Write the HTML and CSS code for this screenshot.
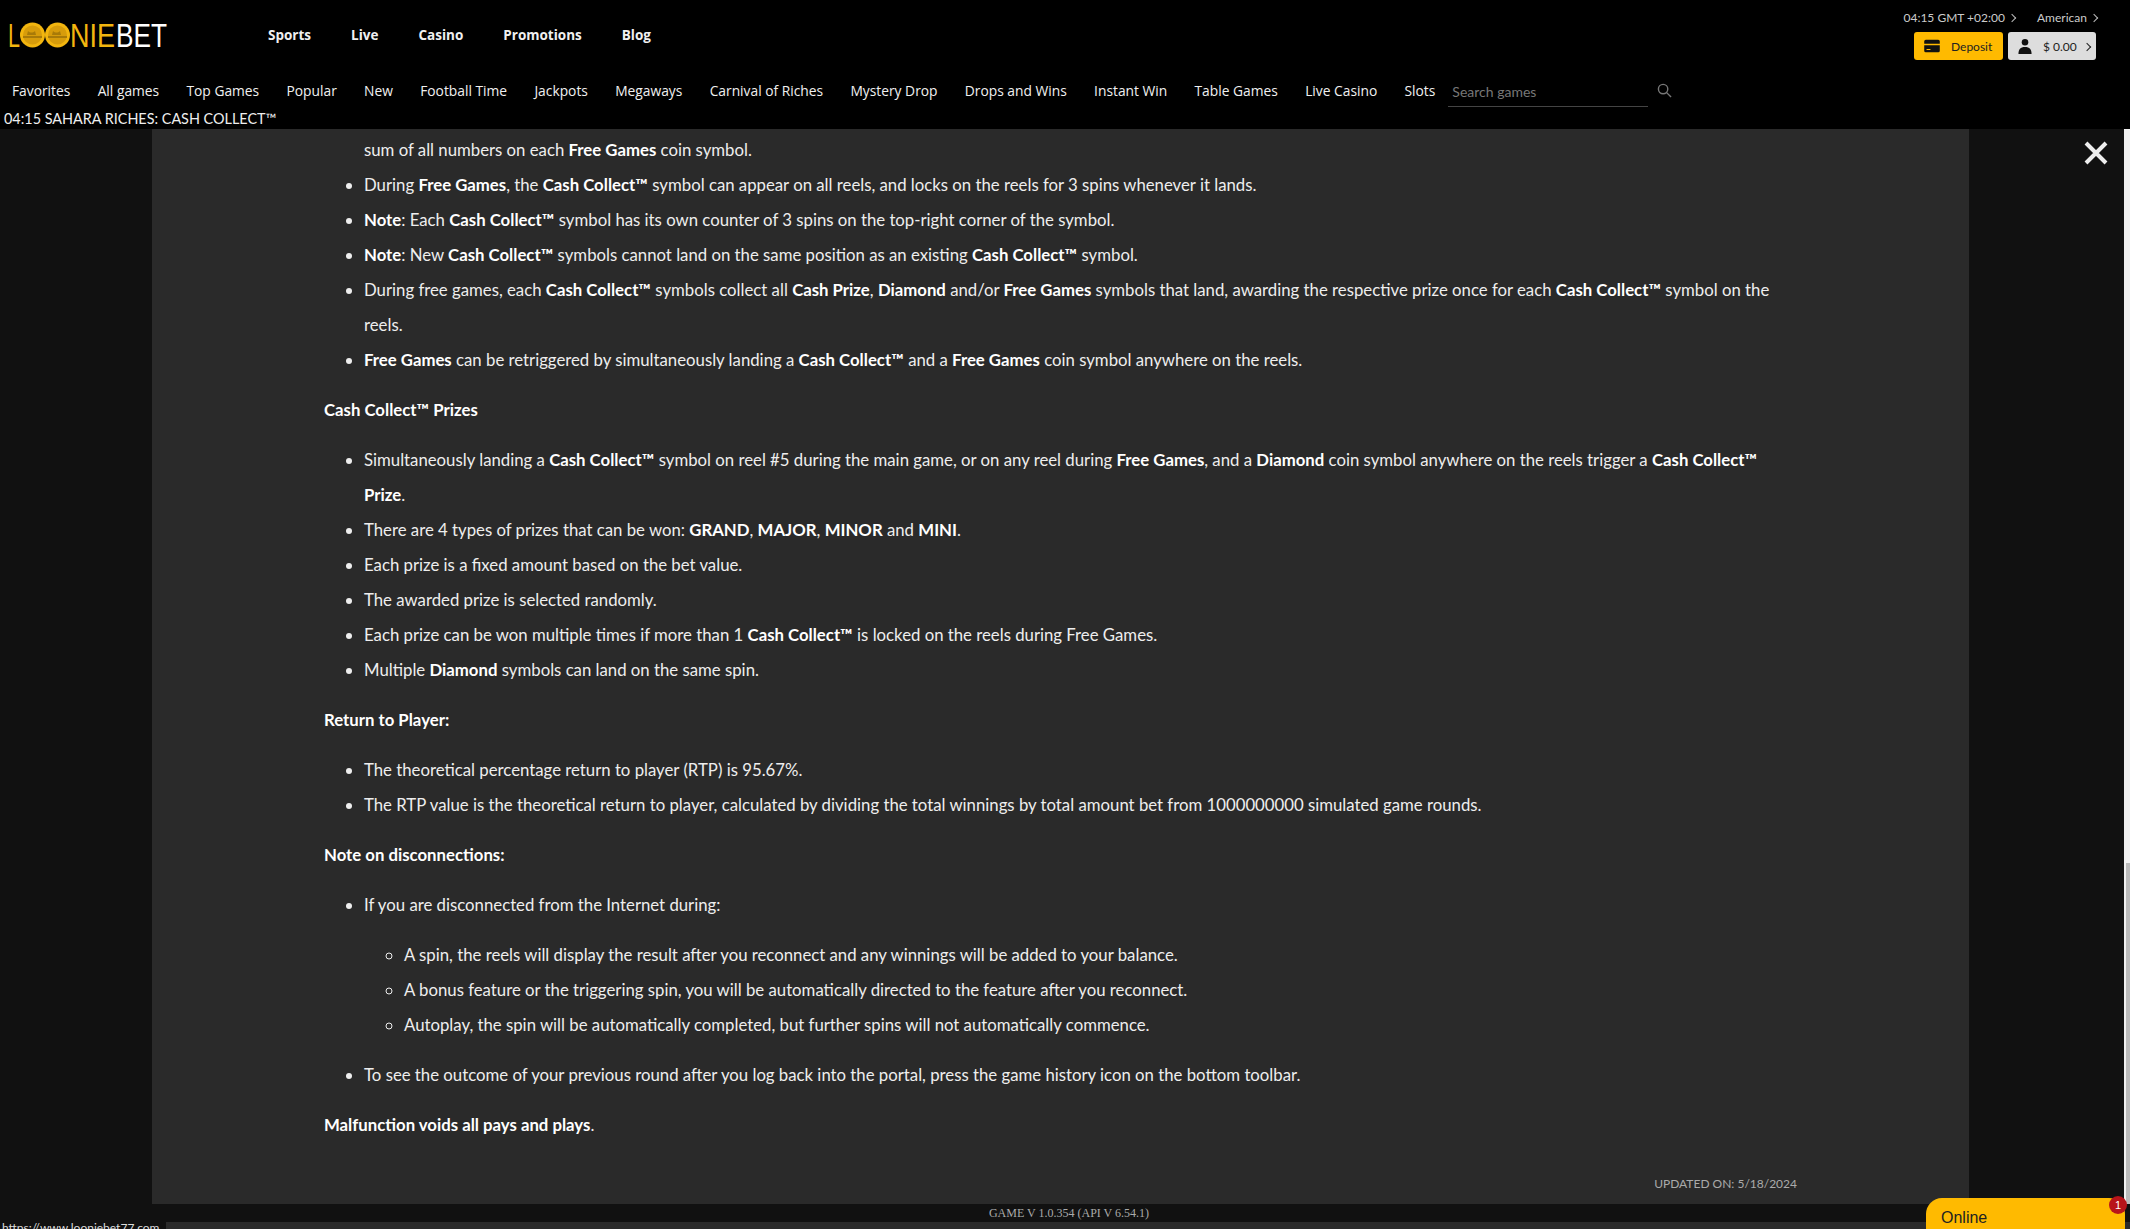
FILE: index.html
```html
<!DOCTYPE html>
<html lang="en">

<head>
    <meta charset="UTF-8" />
    <meta name="viewport" content="width=device-width, initial-scale=1.0" />
    <title>Looniebet - Sahara Riches: Cash Collect</title>
    <link rel="stylesheet" href="styles.css">
</head>

<body>
    <header class="topo">
        <div class="linha-marca">
            <a class="logo" href="#">
                <svg class="logo-svg" viewBox="0 0 160 30">
                    <text class="logo-ouro" x="0" y="27" textLength="12" lengthAdjust="spacingAndGlyphs">L</text>
                    <circle cx="24.500" cy="15" r="12.500" fill="#f2b50f"/>
                    <circle cx="24.500" cy="15" r="9.500" fill="#d79c0b"/>
                    <path d="M15 16h19v2H15zM20 11c2 2 5 2 7 0l1 4h-9z" fill="#a87a08"/>
                    <circle cx="49.500" cy="15" r="12.500" fill="#f2b50f"/>
                    <circle cx="49.500" cy="15" r="9.500" fill="#d79c0b"/>
                    <path d="M40 16h19v2H40zM45 11c2 2 5 2 7 0l1 4h-9z" fill="#a87a08"/>
                    <text class="logo-ouro" x="62" y="27" textLength="45" lengthAdjust="spacingAndGlyphs">NIE</text>
                    <text class="logo-branco" x="108" y="27" textLength="51" lengthAdjust="spacingAndGlyphs">BET</text>
                </svg>
            </a>
            <nav class="menu-principal">
                <a href="#">Sports</a>
                <a href="#">Live</a>
                <a href="#">Casino</a>
                <a href="#">Promotions</a>
                <a href="#">Blog</a>
            </nav>
            <div class="conta">
                <div class="conta-info">
                    <span>04:15 GMT +02:00 <i class="seta"></i></span>
                    <span>American <i class="seta"></i></span>
                </div>
                <div class="conta-botoes">
                    <a class="btn btn-deposito" href="#">
                        <svg class="icone-deposito" viewBox="0 0 20 18"><path d="M2 1h16a2 2 0 0 1 2 2v3H0V3a2 2 0 0 1 2-2zM0 8h20v7a2 2 0 0 1-2 2H2a2 2 0 0 1-2-2zm3 5v1h5v-1z" fill="#111"/></svg>
                        Deposit
                    </a>
                    <a class="btn btn-saldo" href="#">
                        <svg class="icone-saldo" viewBox="0 0 14 16"><circle cx="7" cy="3.500" r="3.500" fill="#111"/><path d="M0 16c0-5 2-7.500 7-7.500s7 2.500 7 7.500z" fill="#111"/></svg>
                        <span class="saldo-valor">$ 0.00 <i class="seta seta-escura"></i></span>
                    </a>
                </div>
            </div>
        </div>
        <div class="linha-jogos">
            <nav class="menu-jogos">
                <a href="#">Favorites</a>
                <a href="#">All games</a>
                <a href="#">Top Games</a>
                <a href="#">Popular</a>
                <a href="#">New</a>
                <a href="#">Football Time</a>
                <a href="#">Jackpots</a>
                <a href="#">Megaways</a>
                <a href="#">Carnival of Riches</a>
                <a href="#">Mystery Drop</a>
                <a href="#">Drops and Wins</a>
                <a href="#">Instant Win</a>
                <a href="#">Table Games</a>
                <a href="#">Live Casino</a>
                <a href="#">Slots</a>
            </nav>
            <input class="busca" type="text" placeholder="Search games">
            <svg class="lupa" viewBox="0 0 16 16"><circle cx="6.500" cy="6.500" r="5" fill="none" stroke="#777" stroke-width="1.500"/><path d="M10 10l5 5" stroke="#777" stroke-width="1.500"/></svg>
        </div>
        <div class="titulo-jogo">04:15 SAHARA RICHES: CASH COLLECT™</div>
    </header>

    <main class="area">
        <article class="painel">
            <ul>
                <li class="continua">sum of all numbers on each <b>Free Games</b> coin symbol.</li>
                <li>During <b>Free Games</b>, the <b>Cash Collect™</b> symbol can appear on all reels, and locks on the reels for 3 spins whenever it lands.</li>
                <li><b>Note</b>: Each <b>Cash Collect™</b> symbol has its own counter of 3 spins on the top-right corner of the symbol.</li>
                <li><b>Note</b>: New <b>Cash Collect™</b> symbols cannot land on the same position as an existing <b>Cash Collect™</b> symbol.</li>
                <li>During free games, each <b>Cash Collect™</b> symbols collect all <b>Cash Prize</b>, <b>Diamond</b> and/or <b>Free Games</b> symbols that land, awarding the respective prize once for each <b>Cash Collect™</b> symbol on the reels.</li>
                <li><b>Free Games</b> can be retriggered by simultaneously landing a <b>Cash Collect™</b> and a <b>Free Games</b> coin symbol anywhere on the reels.</li>
            </ul>
            <p><b>Cash Collect™ Prizes</b></p>
            <ul>
                <li>Simultaneously landing a <b>Cash Collect™</b> symbol on reel #5 during the main game, or on any reel during <b>Free Games</b>, and a <b>Diamond</b> coin symbol anywhere on the reels trigger a <b>Cash Collect™ Prize</b>.</li>
                <li>There are 4 types of prizes that can be won: <b>GRAND</b>, <b>MAJOR</b>, <b>MINOR</b> and <b>MINI</b>.</li>
                <li>Each prize is a fixed amount based on the bet value.</li>
                <li>The awarded prize is selected randomly.</li>
                <li>Each prize can be won multiple times if more than 1 <b>Cash Collect™</b> is locked on the reels during Free Games.</li>
                <li>Multiple <b>Diamond</b> symbols can land on the same spin.</li>
            </ul>
            <p><b>Return to Player:</b></p>
            <ul>
                <li>The theoretical percentage return to player (RTP) is 95.67%.</li>
                <li>The RTP value is the theoretical return to player, calculated by dividing the total winnings by total amount bet from 1000000000 simulated game rounds.</li>
            </ul>
            <p><b>Note on disconnections:</b></p>
            <ul>
                <li>If you are disconnected from the Internet during:
                    <ul>
                        <li>A spin, the reels will display the result after you reconnect and any winnings will be added to your balance.</li>
                        <li>A bonus feature or the triggering spin, you will be automatically directed to the feature after you reconnect.</li>
                        <li>Autoplay, the spin will be automatically completed, but further spins will not automatically commence.</li>
                    </ul>
                </li>
                <li>To see the outcome of your previous round after you log back into the portal, press the game history icon on the bottom toolbar.</li>
            </ul>
            <p><b>Malfunction voids all pays and plays</b>.</p>
            <div class="atualizado">UPDATED ON: 5/18/2024</div>
        </article>
        <button class="fechar" type="button" aria-label="Close">
            <svg viewBox="0 0 24 24"><path d="M2 2l20 20M22 2L2 22" stroke="#eee" stroke-width="4"/></svg>
        </button>
        <div class="barra-rolagem"><div class="barra-polegar"></div></div>
    </main>

    <footer class="rodape">GAME V 1.0.354 (API V 6.54.1)</footer>
    <div class="faixa-baixo"></div>

    <div class="url-status">https://www.looniebet77.com</div>
    <div class="chat">Online<span class="chat-badge">1</span></div>
</body>

</html>
```

FILE: styles.css
```css
* {
    box-sizing: border-box;
}

html,
body {
    height: 100%;
}

body {
    margin: 0;
    background-color: #111;
    color: #fff;
    font-family: Lato, "Open Sans", sans-serif;
    display: flex;
    flex-direction: column;
    overflow: hidden;
    position: relative;
}

a {
    color: inherit;
    text-decoration: none;
}

/* topo */
.topo {
    height: 129px;
    background-color: #000;
    flex: none;
}

.linha-marca {
    height: 75px;
    display: flex;
    padding-left: 8px;
}

.logo {
    display: flex;
    align-items: center;
    height: 70px;
    width: 168px;
}

.logo-svg {
    width: 160px;
    height: 30px;
    overflow: visible;
}

.logo-svg text {
    font-family: "Liberation Sans", sans-serif;
    font-size: 33.500px;
}

.logo-ouro {
    fill: #f2b50f;
}

.logo-branco {
    fill: #fff;
}

.menu-principal {
    display: flex;
    gap: 40px;
    margin-left: 92px;
    height: 70px;
    align-items: center;
    font-family: "Open Sans", sans-serif;
    font-weight: 700;
    font-size: 13.500px;
    color: #f0f0f0;
}

.conta {
    margin-left: auto;
    padding-right: 34px;
    padding-top: 9px;
    display: flex;
    flex-direction: column;
    align-items: flex-end;
    gap: 7px;
}

.conta-info {
    display: flex;
    gap: 19px;
    margin-right: -4px;
    font-size: 12px;
    color: #ccc;
    height: 16px;
    align-items: center;
}

.seta {
    display: inline-block;
    width: 6px;
    height: 6px;
    border-top: 1px solid #bbb;
    border-right: 1px solid #bbb;
    transform: rotate(45deg);
    margin: 0 3px 1px 1px;
}

.seta-escura {
    border-color: #222;
    margin-left: 4px;
}

.conta-botoes {
    display: flex;
    gap: 5px;
}

.btn {
    height: 28px;
    border-radius: 3px;
    display: flex;
    align-items: center;
    padding-left: 10px;
    font-size: 12px;
    color: #222;
    white-space: nowrap;
}

.btn-deposito {
    width: 89px;
    background-color: #ffba00;
    gap: 11px;
}

.btn-saldo {
    width: 88px;
    background-color: #ddd;
    gap: 11px;
}

.icone-deposito {
    width: 16px;
    height: 14px;
}

.icone-saldo {
    width: 14px;
    height: 15px;
}

.linha-jogos {
    height: 28px;
    margin-top: 1px;
    display: flex;
    align-items: center;
    padding-left: 12px;
}

.menu-jogos {
    display: flex;
    gap: 27.300px;
    font-family: "Open Sans", sans-serif;
    font-size: 13.800px;
    color: #f0f0f0;
}

.busca {
    width: 200px;
    height: 30px;
    margin-left: 13px;
    margin-top: 4px;
    background: none;
    border: 0;
    border-bottom: 1px solid #444;
    padding: 0 4px;
    font-family: Lato, sans-serif;
    font-size: 14px;
    color: #ccc;
}

.busca::placeholder {
    color: #777;
}

.lupa {
    width: 15px;
    height: 15px;
    margin-left: 9px;
}

.titulo-jogo {
    padding-left: 4px;
    margin-top: 6px;
    font-size: 14.400px;
    line-height: 18px;
    color: #eee;
}

/* conteudo */
.area {
    flex: 1;
    min-height: 0;
    position: relative;
    overflow: hidden;
    padding-left: 152px;
}

.painel {
    width: 1817px;
    height: 100%;
    background-color: #2a2a2a;
    padding: 3px 172px 0;
    font-size: 16.750px;
    line-height: 35px;
    color: #eee;
    position: relative;
}

.painel b {
    color: #fff;
}

.painel p,
.painel ul {
    margin: 15px 0;
}

.painel > ul:first-child {
    margin-top: 0;
}

.painel ul {
    padding-left: 40px;
}

.painel li.continua {
    list-style: none;
}

.atualizado {
    position: absolute;
    right: 172px;
    bottom: 11px;
    font-size: 12px;
    line-height: 18px;
    color: #aaa;
}

.fechar {
    position: absolute;
    top: 12px;
    right: 22px;
    width: 24px;
    height: 24px;
    padding: 0;
    background: none;
    border: 0;
}

.fechar svg {
    display: block;
}

.barra-rolagem {
    position: absolute;
    top: 0;
    right: 0;
    bottom: 0;
    width: 6px;
    background-color: #f1f1f1;
}

.barra-polegar {
    position: absolute;
    left: 2px;
    right: 0;
    top: 734px;
    bottom: 0;
    background-color: #bbb;
}

/* rodape */
.rodape {
    height: 18px;
    flex: none;
    text-align: center;
    font-family: "Liberation Serif", serif;
    font-size: 12px;
    line-height: 18px;
    color: #aaa;
    padding-left: 8px;
}

.faixa-baixo {
    height: 7px;
    flex: none;
    background-color: #2b2b2b;
}

.url-status {
    position: absolute;
    left: 0;
    bottom: 0;
    height: 9px;
    width: 166px;
    padding-left: 2px;
    background-color: #111;
    font-size: 12px;
    line-height: 16px;
    color: #ddd;
    overflow: hidden;
}

.chat {
    position: absolute;
    right: 5px;
    bottom: 0;
    width: 199px;
    height: 31px;
    padding: 11px 15px 0;
    background-color: #ffba00;
    border-radius: 16px 16px 0 0;
    font-family: "Liberation Sans", sans-serif;
    font-size: 16px;
    color: #222;
}

.chat-badge {
    position: absolute;
    top: -2px;
    right: -2px;
    width: 18px;
    height: 18px;
    border-radius: 50%;
    background-color: #b8141a;
    color: #fff;
    font-size: 11px;
    line-height: 18px;
    text-align: center;
}
```
